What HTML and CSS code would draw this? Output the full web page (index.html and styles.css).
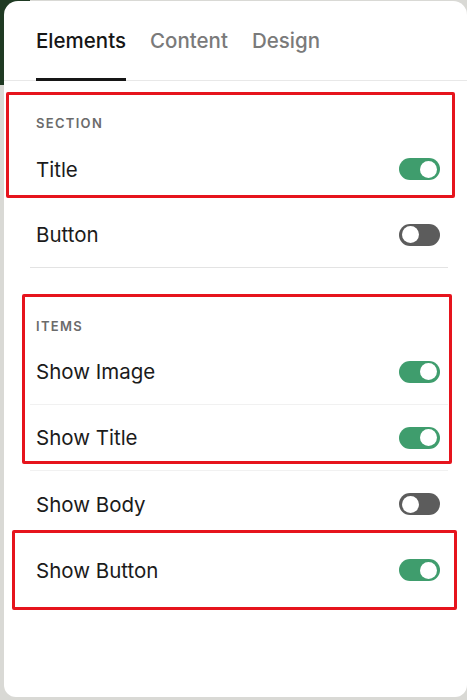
FILE: index.html
```html
<!DOCTYPE html>
<html>
<head>
<meta charset="utf-8">
<link rel="stylesheet" href="styles.css">
</head>
<body>
<div class="backdrop"></div>
<div class="card">
  <nav class="tabs">
    <span class="tab active">Elements</span>
    <span class="tab">Content</span>
    <span class="tab">Design</span>
  </nav>
  <div class="panel">
    <section class="group group-first">
      <div class="label">SECTION</div>
      <div class="row"><span>Title</span><span class="toggle on"></span></div>
      <div class="row last"><span>Button</span><span class="toggle"></span></div>
    </section>
    <section class="group group-second">
      <div class="label">ITEMS</div>
      <div class="row sep"><span>Show Image</span><span class="toggle on"></span></div>
      <div class="row sep"><span>Show Title</span><span class="toggle on"></span></div>
      <div class="row"><span>Show Body</span><span class="toggle"></span></div>
      <div class="row"><span>Show Button</span><span class="toggle on"></span></div>
    </section>
  </div>
</div>
<div class="mark mark-1"></div>
<div class="mark mark-2"></div>
<div class="mark mark-3"></div>
</body>
</html>
```

FILE: styles.css
```css
* { box-sizing: border-box; }
html, body {
  margin: 0;
  padding: 0;
  width: 467px;
  height: 700px;
  overflow: hidden;
}
body {
  position: relative;
  background: #d9d9d5;
  font-family: "Inter", "Liberation Sans", sans-serif;
  color: #1b1b1b;
}
.backdrop {
  position: absolute;
  left: 0;
  top: 0;
  width: 30px;
  height: 85px;
  background: #1f3a23;
}
.card {
  position: relative;
  margin: 1px 0 0 4px;
  width: 463px;
  height: 696px;
  background: #fff;
  border-radius: 14px 14px 12px 12px;
}
.tabs {
  display: flex;
  gap: 24px;
  height: 80px;
  padding-left: 32px;
  border-bottom: 1px solid #e8e8e8;
}
.tab {
  display: flex;
  align-items: center;
  padding-top: 2px;
  font-size: 20.5px;
  font-weight: 500;
  color: #7a7a7a;
  border-bottom: 3px solid transparent;
  margin-bottom: -1px;
  letter-spacing: 0;
}
.tab.active {
  color: #161616;
  border-bottom-color: #161616;
}
.panel {
  padding: 0 19px 0 26px;
}
.group-first { padding-top: 34px; }
.group-second { padding-top: 50px; }
.label {
  height: 16px;
  line-height: 16px;
  margin: 0 0 5px 6px;
  font-size: 13px;
  font-weight: 600;
  letter-spacing: 1.3px;
  color: #6b6b6b;
}
.row {
  display: flex;
  align-items: center;
  justify-content: space-between;
  height: 66px;
  padding: 0 8px 0 6px;
  font-size: 20.5px;
  letter-spacing: 0;
}
.row.last { border-bottom: 1px solid #e3e3e3; }
.row.sep { border-bottom: 1px solid #f1f1f1; }
.toggle {
  position: relative;
  width: 41px;
  height: 22px;
  border-radius: 11px;
  background: #5c5c5c;
}
.toggle::after {
  content: "";
  position: absolute;
  top: 2.5px;
  left: 3px;
  width: 17px;
  height: 17px;
  border-radius: 50%;
  background: #fff;
}
.toggle.on { background: #3f9d6d; }
.toggle.on::after { left: auto; right: 3px; }
.mark {
  position: absolute;
  border: 3px solid #e6141d;
  border-radius: 2px;
}
.mark-1 { left: 6px; top: 92px; width: 449px; height: 106px; }
.mark-2 { left: 22px; top: 294px; width: 430px; height: 170px; }
.mark-3 { left: 12px; top: 530px; width: 445px; height: 80px; }
```
